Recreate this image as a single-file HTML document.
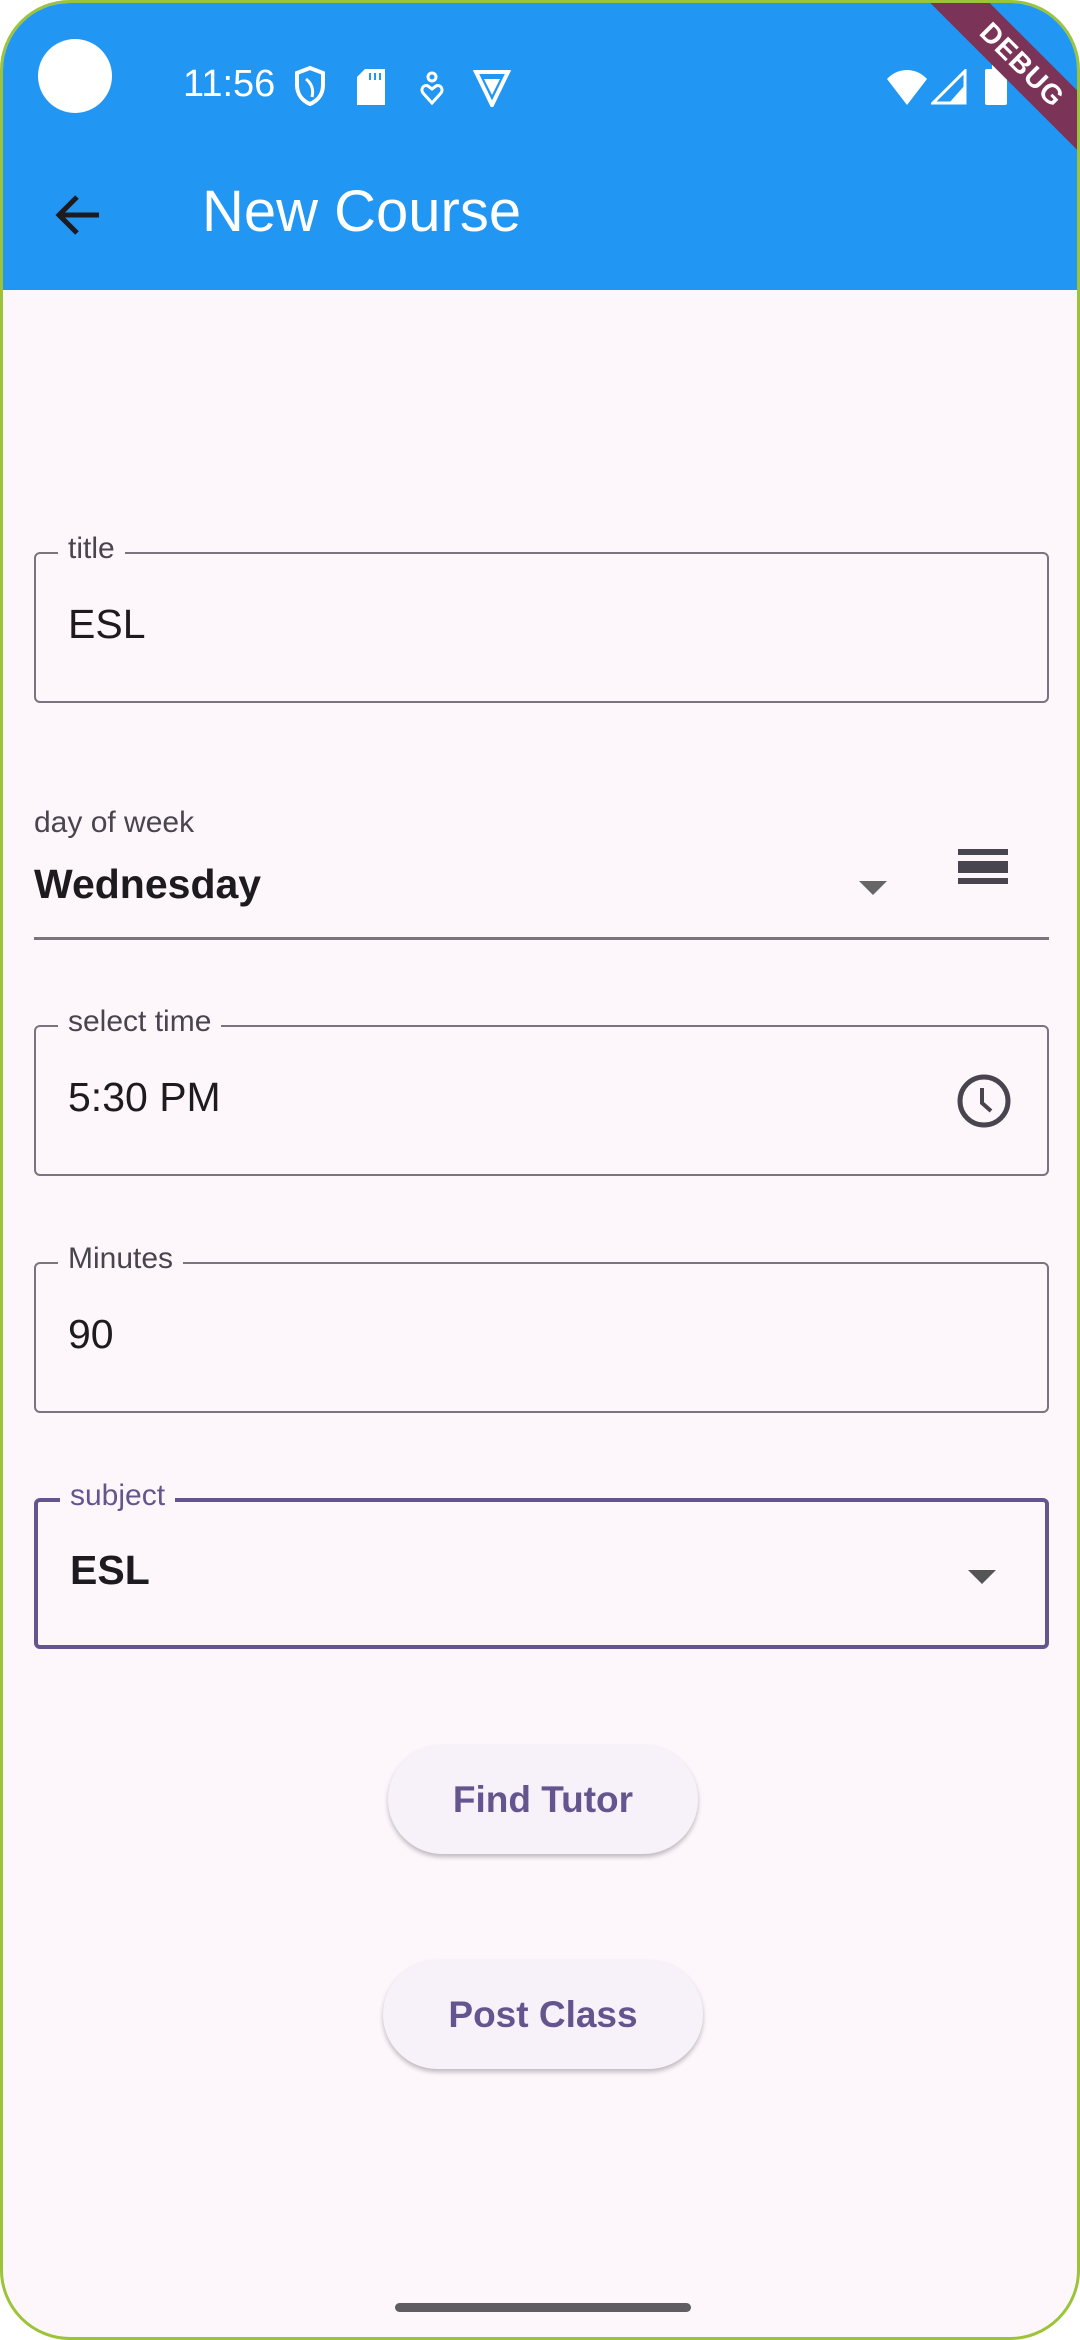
<!DOCTYPE html>
<html><head><meta charset="utf-8">
<style>
*{margin:0;padding:0;box-sizing:border-box}
html,body{width:1080px;height:2340px;background:#fff;overflow:hidden;font-family:"Liberation Sans",sans-serif}
.screen{position:absolute;left:0;top:0;width:1080px;height:2340px;border:3px solid #9cc43a;border-radius:70px;overflow:hidden;background:#FDF7FC}
.appbar{position:absolute;left:0;top:0;width:1080px;height:287px;background:#2196F3}
.abs{position:absolute}
.field{position:absolute;left:31px;width:1015px;height:151px;border:2px solid #79747E;border-radius:6px}
.lbl{position:absolute;top:-22px;left:22px;padding:0 10px;background:#FDF7FC;font-size:30px;color:#49454F}
.val{position:absolute;left:32px;font-size:41px;color:#1D1B20}
.btn{position:absolute;height:109px;border-radius:55px;background:#F7F2F9;box-shadow:0 3px 5px rgba(0,0,0,0.25);color:#65558F;font-size:37px;font-weight:bold;display:flex;align-items:center;justify-content:center}
</style></head><body>
<div class="screen">
<div class="appbar">
  <div class="abs" style="left:35px;top:36px;width:74px;height:74px;border-radius:50%;background:#fff"></div>
  <div class="abs" style="left:180px;top:60px;font-size:38px;color:#fff">11:56</div>
  <svg class="abs" style="left:290px;top:62px" width="34" height="42" viewBox="0 0 34 42"><path d="M17 3 L30 8 V20 C30 30 24 36 17 39 C10 36 4 30 4 20 V8 Z" fill="none" stroke="#fff" stroke-width="4"/><path d="M13 14 C18 18 21 24 19 32" fill="none" stroke="#fff" stroke-width="3"/></svg>
  <svg class="abs" style="left:354px;top:66px" width="28" height="36" viewBox="0 0 28 36"><path d="M8 0 H28 V36 H0 V8 Z" fill="#fff"/><rect x="12" y="4" width="2" height="7" fill="#2196F3"/><rect x="17" y="4" width="2" height="7" fill="#2196F3"/><rect x="22" y="4" width="2" height="7" fill="#2196F3"/></svg>
  <svg class="abs" style="left:416px;top:68px" width="26" height="34" viewBox="0 0 26 34"><circle cx="13" cy="6" r="4" fill="none" stroke="#fff" stroke-width="3"/><path d="M13 32 L4 22 C1 18 5 13 9 15 L13 18 L17 15 C21 13 25 18 22 22 Z" fill="none" stroke="#fff" stroke-width="3"/></svg>
  <svg class="abs" style="left:470px;top:66px" width="38" height="38" viewBox="0 0 38 38"><path d="M3 3 H35 L19 36 Z" fill="none" stroke="#fff" stroke-width="4"/><path d="M11 10 H27 L19 26 Z" fill="#fff"/></svg>
  <svg class="abs" style="left:883px;top:66px" width="42" height="36" viewBox="0 0 42 36"><path d="M1 10 C12 -2 30 -2 41 10 L21 36 Z" fill="#fff"/></svg>
  <svg class="abs" style="left:928px;top:66px" width="36" height="36" viewBox="0 0 36 36"><path d="M34 2 V34 H2 Z" fill="none" stroke="#fff" stroke-width="3"/><path d="M34 16 V34 H18 Z" fill="#fff"/></svg>
  <svg class="abs" style="left:982px;top:62px" width="22" height="40" viewBox="0 0 22 40"><rect x="7" y="0" width="8" height="4" fill="#fff"/><rect x="0" y="4" width="22" height="36" rx="2" fill="#fff"/></svg>
  <svg class="abs" style="left:50px;top:190px" width="50" height="44" viewBox="0 0 50 44"><path d="M46 22 H6 M24 4 L6 22 L24 40" fill="none" stroke="#1D1B20" stroke-width="5"/></svg>
  <div class="abs" style="left:199px;top:175px;font-size:58px;color:#fff">New Course</div>
  <div class="abs" style="left:869px;top:41px;width:300px;height:42px;background:#7b3458;transform:rotate(45deg);color:#fff;font-weight:bold;font-size:28px;text-align:center;line-height:42px;letter-spacing:1px">DEBUG</div>
</div>

<div class="field" style="top:549px"><div class="lbl">title</div><div class="val" style="top:47px">ESL</div></div>

<div class="abs" style="left:31px;top:803px;font-size:30px;color:#49454F">day of week</div>
<div class="abs" style="left:31px;top:858px;font-size:41px;font-weight:bold;color:#1D1B20">Wednesday</div>
<svg class="abs" style="left:856px;top:878px" width="28" height="14" viewBox="0 0 28 14"><path d="M0 0 H28 L14 14 Z" fill="#666"/></svg>
<div class="abs" style="left:955px;top:846px;width:50px;height:6px;background:#49454F"></div>
<div class="abs" style="left:955px;top:858px;width:50px;height:12px;background:#49454F"></div>
<div class="abs" style="left:955px;top:875px;width:50px;height:6px;background:#49454F"></div>
<div class="abs" style="left:31px;top:934px;width:1015px;height:3px;background:#79747E"></div>

<div class="field" style="top:1022px"><div class="lbl">select time</div><div class="val" style="top:47px">5:30 PM</div>
<svg class="abs" style="left:920px;top:46px" width="56" height="56" viewBox="0 0 56 56"><circle cx="28" cy="28" r="24" fill="none" stroke="#49454F" stroke-width="5"/><path d="M26 15 V30 L35 38" fill="none" stroke="#49454F" stroke-width="4"/></svg></div>

<div class="field" style="top:1259px"><div class="lbl">Minutes</div><div class="val" style="top:47px">90</div></div>

<div class="field" style="top:1495px;border:4px solid #65558F"><div class="lbl" style="color:#65558F;top:-23px">subject</div><div class="val" style="top:45px;font-weight:bold">ESL</div>
<svg class="abs" style="left:930px;top:68px" width="28" height="14" viewBox="0 0 28 14"><path d="M0 0 H28 L14 14 Z" fill="#555"/></svg></div>

<div class="btn" style="left:385px;top:1742px;width:310px">Find Tutor</div>
<div class="btn" style="left:380px;top:1957px;width:320px">Post Class</div>

<div class="abs" style="left:392px;top:2300px;width:296px;height:9px;border-radius:5px;background:#5f5d62"></div>
</div>
</body></html>
